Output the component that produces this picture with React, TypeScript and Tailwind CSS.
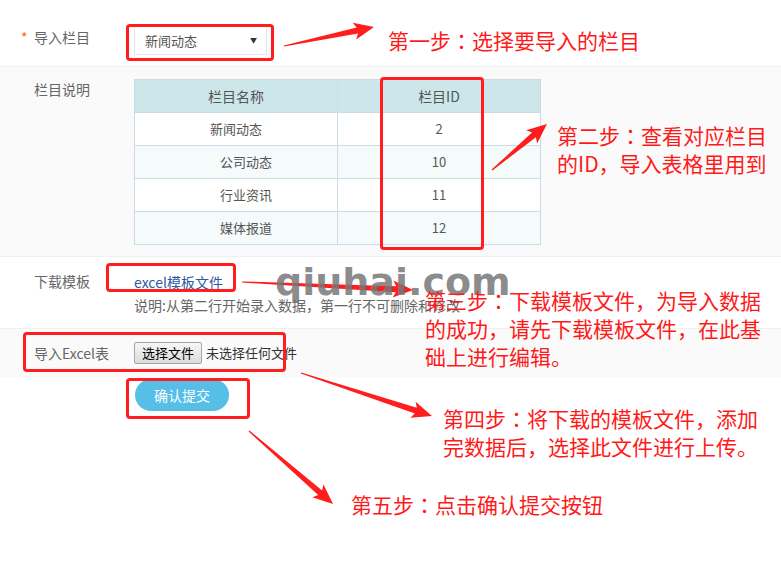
type Pt = [number, number];

// annotation arrows: tail -> tip
const arrows: [Pt, Pt][] = [
  [[284, 46], [374, 27]],
  [[492, 170], [547, 124]],
  [[242, 282], [413, 290]],
  [[301, 373], [432, 416]],
  [[249, 431], [333, 504]],
];

function arrowPoints(tail: Pt, tip: Pt) {
  const [x1, y1] = tail;
  const [x2, y2] = tip;
  const len = Math.hypot(x2 - x1, y2 - y1);
  const ux = (x2 - x1) / len;
  const uy = (y2 - y1) / len;
  const nx = -uy;
  const ny = ux;
  const headLen = 17;
  const headHalf = 8.5;
  const neckHalf = 3;
  const tailHalf = 0.6;
  const back = 3;
  const bx = x2 - ux * headLen;
  const by = y2 - uy * headLen;
  const pts: Pt[] = [
    [x1 + nx * tailHalf, y1 + ny * tailHalf],
    [bx + nx * neckHalf, by + ny * neckHalf],
    [bx - ux * back + nx * headHalf, by - uy * back + ny * headHalf],
    [x2, y2],
    [bx - ux * back - nx * headHalf, by - uy * back - ny * headHalf],
    [bx - nx * neckHalf, by - ny * neckHalf],
    [x1 - nx * tailHalf, y1 - ny * tailHalf],
  ];
  return pts.map((p) => `${p[0].toFixed(1)},${p[1].toFixed(1)}`).join(" ");
}

const columns = [
  { name: "新闻动态", id: "2", shift: false },
  { name: "公司动态", id: "10", shift: true },
  { name: "行业资讯", id: "11", shift: true },
  { name: "媒体报道", id: "12", shift: true },
];

// full-width colon drawn centred, as in the screenshot
const Colon = () => <span className="font-['Noto_Sans_CJK_JP',sans-serif]">：</span>;

export default function App() {
  return (
    <div className="relative h-[568px] w-[781px] overflow-hidden bg-white font-['Noto_Sans_CJK_SC',sans-serif] text-[14px] text-[#666]">
      {/* 导入栏目 */}
      <div className="flex h-[66px] items-start pt-[26px]">
        <div className="flex w-[134px] pl-[21px] leading-[22px]">
          <span className="w-[13px] text-[#f60]">*</span>
          <span>导入栏目</span>
        </div>
        <div className="flex h-[29px] w-[133px] items-center justify-between border border-[#e6e6e6] bg-white pl-[10px] pr-[9px] text-[13px] text-[#555]">
          新闻动态
          <span className="text-[7px] text-[#333]">▼</span>
        </div>
      </div>

      {/* 栏目说明 */}
      <div className="flex border-t border-[#f0f0f0] bg-[#fafafa] pb-[11px] pt-[12px]">
        <div className="w-[134px] pl-[34px] leading-[20px]">栏目说明</div>
        <table className="w-[407px] border-collapse text-center text-[13px] text-[#555]">
          <thead>
            <tr className="h-[33px] bg-[#cde6ea] text-[14px]">
              <th className="w-[203px] border border-[#cbdbe8] font-normal">栏目名称</th>
              <th className="border border-[#cbdbe8] font-normal">栏目ID</th>
            </tr>
          </thead>
          <tbody>
            {columns.map((c, i) => (
              <tr key={c.id} className={`h-[33px] ${i % 2 ? "bg-[#f5fafa]" : "bg-white"}`}>
                <td className={`border border-[#cbdbe8] ${c.shift ? "pl-[20px]" : ""}`}>{c.name}</td>
                <td className="border border-[#cbdbe8]">{c.id}</td>
              </tr>
            ))}
          </tbody>
        </table>
      </div>

      {/* 下载模板 */}
      <div className="flex h-[72px] border-t border-[#f0f0f0] pt-[15px]">
        <div className="w-[134px] pl-[34px] leading-[18px]">下载模板</div>
        <div>
          <div className="leading-[20px] text-[#2c5aa0]">excel模板文件</div>
          <div className="mt-[3px] leading-[20px]">说明:从第二行开始录入数据，第一行不可删除和修改</div>
        </div>
      </div>

      {/* 导入Excel表 */}
      <div className="flex h-[49px] items-center border-t border-[#f0f0f0] bg-[#fafafa]">
        <div className="w-[134px] pl-[34px]">导入Excel表</div>
        <span className="h-[22px] rounded-[2px] border border-[#a6a6a6] bg-linear-to-b from-[#f6f6f6] to-[#dcdcdc] px-[7px] text-[13px] leading-[20px] text-black">
          选择文件
        </span>
        <span className="ml-[4px] text-[13px] text-[#333]">未选择任何文件</span>
      </div>

      <div className="pl-[135px] pt-[2px]">
        <button className="h-[32px] w-[94px] rounded-full bg-[#55bfe8] text-[14px] text-white">确认提交</button>
      </div>

      {/* annotations */}
      <div className="absolute left-[126px] top-[24px] h-[37px] w-[148px] rounded-[4px] border-[3px] border-[#ff1d1d]" />
      <div className="absolute left-[380px] top-[77px] h-[173px] w-[104px] rounded-[4px] border-[3px] border-[#ff1d1d]" />
      <div className="absolute left-[106px] top-[263px] h-[29px] w-[130px] rounded-[4px] border-[3px] border-[#ff1d1d]" />
      <div className="absolute left-[23px] top-[332px] h-[40px] w-[263px] rounded-[4px] border-[3px] border-[#ff1d1d]" />
      <div className="absolute left-[126px] top-[378px] h-[41px] w-[124px] rounded-[4px] border-[3px] border-[#ff1d1d]" />

      <svg className="pointer-events-none absolute left-0 top-0" width="781" height="568">
        {arrows.map(([a, b], i) => (
          <polygon key={i} points={arrowPoints(a, b)} fill="#ff1d1d" />
        ))}
      </svg>

      <div className="absolute left-[275px] top-[263px] font-['DejaVu_Sans',sans-serif] text-[38px] font-bold leading-none text-[#777]/85">
        qiuhai.com
      </div>

      <div className="absolute left-[388px] top-[26px] whitespace-nowrap text-[21px] leading-[28px] text-[#ff1a1a]">
        第一步<Colon />选择要导入的栏目
      </div>
      <div className="absolute left-[557px] top-[121px] whitespace-nowrap text-[21px] leading-[28px] text-[#ff1a1a]">
        第二步<Colon />查看对应栏目
        <br />
        的ID，导入表格里用到
      </div>
      <div className="absolute left-[425px] top-[286px] whitespace-nowrap text-[21px] leading-[28px] text-[#ff1a1a]">
        第三步<Colon />下载模板文件，为导入数据
        <br />
        的成功，请先下载模板文件，在此基
        <br />
        础上进行编辑。
      </div>
      <div className="absolute left-[443px] top-[404px] whitespace-nowrap text-[21px] leading-[28px] text-[#ff1a1a]">
        第四步<Colon />将下载的模板文件，添加
        <br />
        完数据后，选择此文件进行上传。
      </div>
      <div className="absolute left-[351px] top-[490px] whitespace-nowrap text-[21px] leading-[28px] text-[#ff1a1a]">
        第五步<Colon />点击确认提交按钮
      </div>
    </div>
  );
}
